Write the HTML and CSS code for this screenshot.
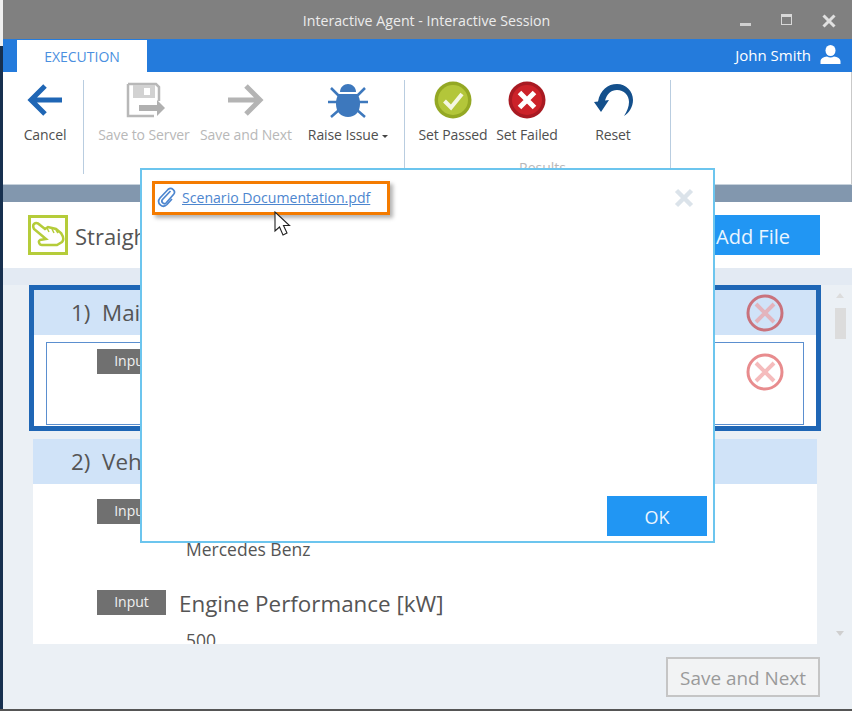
FILE: index.html
```html
<!DOCTYPE html>
<html lang="en">
<head>
<meta charset="utf-8">
<title>Interactive Agent - Interactive Session</title>
<link rel="stylesheet" href="styles.css">
</head>
<body>
<div class="window">
  <header class="titlebar">
    <span class="title">Interactive Agent - Interactive Session</span>
    <div class="winctl">
      <svg class="ctl" width="12" height="12" viewBox="0 0 12 12"><rect x="0" y="9" width="11" height="3" fill="#d0d0d0"/></svg>
      <svg class="ctl" width="12" height="12" viewBox="0 0 12 12"><rect x="0.5" y="0.5" width="10" height="10" fill="none" stroke="#d8d8d8"/><rect x="0" y="0" width="11" height="3" fill="#d8d8d8"/></svg>
      <svg class="ctl" width="14" height="14" viewBox="0 0 14 14"><path d="M1.5 1.5 12.5 12.500M12.500 1.5 1.5 12.500" stroke="#e0e0e0" stroke-width="3"/></svg>
    </div>
  </header>
  <div class="tabbar">
    <div class="tab">EXECUTION</div>
    <div class="user">
      <span>John Smith</span>
      <svg width="21" height="19" viewBox="0 0 21 19"><ellipse cx="10.500" cy="5.500" rx="5" ry="5.500" fill="#fff"/><path d="M0.500 19v-2.500c0-3 3-4.500 6.500-5 2 1.400 5 1.400 7 0 3.500 .5 6.500 2 6.500 5V19z" fill="#fff"/></svg>
    </div>
  </div>
  <nav class="ribbon">
    <div class="group group-a">
      <div class="item">
        <svg class="ico" width="40" height="38" viewBox="0 0 40 38"><path d="M37 19H6M20 5 6 19l14 14" fill="none" stroke="#1f66b5" stroke-width="5"/></svg>
        <span class="lbl">Cancel</span>
      </div>
    </div>
    <div class="group group-b">
      <div class="item wide off">
        <svg class="ico" width="44" height="38" viewBox="-2 0 44 38"><path d="M4 3H32l3 3v14M30 35H4V3" fill="none" stroke="#b8b8b8" stroke-width="2.500"/><path d="M9 4h22v13H9z" fill="#d2d2d2"/><rect x="20" y="7" width="6" height="7" fill="#fff"/><path d="M15 24h18v-5l8 8-8 8v-5H15z" fill="#b0b0b0"/></svg>
        <span class="lbl">Save to Server</span>
      </div>
      <div class="item wide off">
        <svg class="ico" width="40" height="38" viewBox="0 0 40 38"><path d="M2 19H34M20 5 34 19 20 33" fill="none" stroke="#b4b4b4" stroke-width="5"/></svg>
        <span class="lbl">Save and Next</span>
      </div>
      <div class="item wide">
        <svg class="ico" width="40" height="38" viewBox="0 0 40 38"><path d="M12 11c0-5 4-8 8-8s8 3 8 8z" fill="#3d78bd"/><path d="M11 13h18c2 2 3 5 3 10 0 8-5 13-12 13S8 31 8 23c0-5 1-8 3-10z" fill="#3d78bd"/><path d="M3 7l8 8M37 7l-8 8M0 21h9M40 21h-9M3 36l8-7M37 36l-8-7" stroke="#3d78bd" stroke-width="2.500"/></svg>
        <span class="lbl">Raise Issue <i class="caret"></i></span>
      </div>
    </div>
    <div class="group group-c">
      <div class="item mid">
        <svg class="ico" width="38" height="38" viewBox="0 0 38 38"><circle cx="19" cy="19" r="18.500" fill="#94a824"/><circle cx="19" cy="19" r="15" fill="#b3c63a"/><path d="M10.500 20l6.500 6.500L28 13" fill="none" stroke="#f4f7e2" stroke-width="4"/></svg>
        <span class="lbl">Set Passed</span>
      </div>
      <div class="item mid">
        <svg class="ico" width="38" height="38" viewBox="0 0 38 38"><circle cx="19" cy="19" r="18.500" fill="#a81a22"/><circle cx="19" cy="19" r="15" fill="#cc2229"/><path d="M11.500 11.500l15 15M26.500 11.500l-15 15" stroke="#fff" stroke-width="5"/></svg>
        <span class="lbl">Set Failed</span>
      </div>
      <div class="item last">
        <svg class="ico" width="42" height="38" viewBox="0 0 42 38"><path d="M2 21 6 20.500C8 9 16 3 25 3c9 0 16 7 16 16 0 7-4 13-9 16 3-5 5-9 5-14 0-7-5-12-12-12-6 0-10 4-12 10.500L17 19 9 31z" fill="#14508c"/></svg>
        <span class="lbl">Reset</span>
      </div>
      <span class="caption">Results</span>
    </div>
  </nav>
  <div class="strip"></div>
  <section class="head">
    <div class="head-left">
      <div class="handbox">
        <svg width="34" height="34" viewBox="0 0 34 34"><path d="M3 6C5 4 7 5 9 7l5 4 3-2 4 1 4 1 5 4c2 3 3 7 1 9l-5 3H11c-3 0-4-4-2-5l6-1L3 11C2 9 2 7 3 6z" fill="none" stroke="#b5cc3a" stroke-width="2.500"/><path d="M16 10l2 4M21 11l2 4M25 12l2 3" stroke="#b5cc3a" stroke-width="1.500"/></svg>
      </div>
      <h1 class="scen">Straight Forward</h1>
    </div>
    <button class="addfile">Add File</button>
  </section>
  <main class="content">
    <div class="viewport">
      <div class="list">
        <article class="step current">
          <div class="step-head">
            <span class="step-title">1)&nbsp; Main Data</span>
            <svg class="xcirc" width="38" height="38" viewBox="0 0 38 38"><circle cx="19" cy="19" r="17" fill="none" stroke="#c9727c" stroke-width="3"/><path d="M10 10l18 18M28 10 10 28" stroke="#e3b4bd" stroke-width="4"/></svg>
          </div>
          <div class="inner">
            <span class="badge">Input</span>
            <svg class="xcirc low" width="38" height="38" viewBox="0 0 38 38"><circle cx="19" cy="19" r="17" fill="none" stroke="#e88c8e" stroke-width="3"/><path d="M10 10l18 18M28 10 10 28" stroke="#f5bcbd" stroke-width="4"/></svg>
          </div>
        </article>
        <article class="step second">
          <div class="step-head">
            <span class="step-title">2)&nbsp; Vehicle</span>
          </div>
          <div class="field">
            <span class="badge">Input</span>
            <div class="field-body">
              <div class="field-name">Manufacturer</div>
              <div class="field-val">Mercedes Benz</div>
            </div>
          </div>
          <div class="field">
            <span class="badge">Input</span>
            <div class="field-body">
              <div class="field-name">Engine Performance [kW]</div>
              <div class="field-val">500</div>
            </div>
          </div>
        </article>
      </div>
      <div class="scroll">
        <i class="up"></i>
        <b class="thumb"></b>
        <i class="down"></i>
      </div>
    </div>
    <div class="foot"><button class="next">Save and Next</button></div>
  </main>
</div>

<div class="modal">
  <div class="modal-top">
    <div class="filebox">
      <svg width="20" height="22" viewBox="0 0 20 22"><path d="M13.500 5 5.500 13.500c-2 2.500 1.500 5.500 3.500 3.500l7.500-8.500c3-3.500-2-8-5.500-5L3 12c-4 5 2.500 11 7 6.500l5-5.500" fill="none" stroke="#4d86cf" stroke-width="1.700"/></svg>
      <a class="filelink" href="#">Scenario Documentation.pdf</a>
    </div>
    <svg class="modal-x" width="20" height="20" viewBox="0 0 20 20"><path d="M2.500 2.500l15 15M17.500 2.500l-15 15" stroke="#dbe3ea" stroke-width="4.500"/></svg>
  </div>
  <div class="modal-foot"><button class="ok">OK</button></div>
</div>
<svg class="cursor" width="17" height="25" viewBox="0 0 17 25"><path d="M1 1v19l4.500-4 3.500 8 4-2-3.500-7.500h6z" fill="#fff" stroke="#222" stroke-width="1.100"/></svg>
</body>
</html>
```
FILE: styles.css
```css
* { box-sizing: border-box; }
html, body { margin: 0; padding: 0; }
body {
  width: 852px;
  height: 711px;
  overflow: hidden;
  position: relative;
  font-family: "Open Sans", "Noto Sans", sans-serif;
  background: #fff;
  color: #555;
}
.window {
  display: flex;
  flex-direction: column;
  height: 711px;
  padding-left: 3px;
  border-bottom: 2px solid #555;
  background: linear-gradient(#f0f0f0 46px, #17304f 46px) 0 0 / 3px 100% no-repeat, #ebf0f5;
}
.titlebar {
  height: 39px;
  background: #808080;
  display: flex;
  align-items: center;
  justify-content: center;
  position: relative;
  flex: none;
}
.title { color: #ececec; font-size: 14.200px; padding: 2px 2px 0 0; }
.winctl {
  position: absolute;
  left: 737px;
  top: 14px;
  display: flex;
  gap: 29px;
  align-items: flex-start;
}
.ctl { display: block; }
.tabbar {
  height: 33px;
  background: #247bdc;
  display: flex;
  justify-content: space-between;
  padding: 1px 11px 0 14px;
  flex: none;
}
.tab {
  width: 130px;
  background: #fff;
  color: #4a8fe0;
  font-size: 14px;
  text-align: center;
  line-height: 33px;
}
.user {
  display: flex;
  align-items: center;
  gap: 9px;
  color: #fff;
  font-size: 15px;
  padding-bottom: 3px;
}
.ribbon {
  height: 113px;
  flex: none;
  background: #fff;
  display: flex;
  align-items: flex-start;
  padding-top: 8px;
  border-bottom: 1px solid #c7d2dc;
  border-right: 1px solid #c9c9c9;
}
.group {
  display: flex;
  height: 94px;
  border-right: 1px solid #b9cde0;
  position: relative;
}
.group-a { width: 81px; padding-left: 4px; }
.group-b { width: 321px; padding-left: 9px; }
.group-c { width: 266px; padding-left: 11px; }
.item {
  display: flex;
  flex-direction: column;
  align-items: center;
  width: 76px;
}
.wide { width: 102px; }
.mid { width: 74px; }
.last { width: 98px; }
.ico { display: block; margin-top: 1px; }
.lbl {
  font-size: 14px;
  letter-spacing: -.1px;
  margin-top: 6px;
  color: #4f4f4f;
  white-space: nowrap;
  line-height: 19px;
}
.off .lbl { color: #b8b8b8; }
.caret {
  display: inline-block;
  width: 0; height: 0;
  border: 3px solid transparent;
  border-top: 3px solid #444;
  border-bottom: 0;
  vertical-align: 2px;
}
.caption {
  position: absolute;
  left: 114px;
  top: 78px;
  font-size: 14px;
  color: #b8b8b8;
}
.strip { height: 17px; flex: none; background: #8297ae; }
.head {
  height: 66px;
  flex: none;
  background: #fff;
  display: flex;
  justify-content: space-between;
  align-items: flex-start;
  padding: 13px 32px 0 25px;
}
.head-left { display: flex; align-items: center; gap: 7px; }
.handbox {
  width: 40px; height: 40px;
  border: 3px solid #b5cc3a;
  display: flex;
  align-items: center;
  justify-content: center;
}
.scen { margin: 2px 0 0; font-size: 22px; font-weight: 400; color: #555; }
.addfile {
  width: 172px; height: 40px;
  background: #2196f3;
  color: #eaf5ff;
  border: 0;
  font: 20px "Open Sans", sans-serif;
  padding: 3px 0 0 68px;
  text-align: left;
  white-space: nowrap;
}
.content {
  flex: 1;
  min-height: 0;
  display: flex;
  flex-direction: column;
  border-top: 17px solid #e3eaf3;
}
.viewport {
  height: 359px;
  flex: none;
  display: flex;
  padding-left: 26px;
  overflow: hidden;
}
.list { width: 792px; flex: none; }
.step.current {
  border: 5px solid #1f66b5;
  height: 146px;
  background: #fff;
}
.step-head {
  height: 45px;
  background: #d0e3f8;
  display: flex;
  align-items: center;
  justify-content: space-between;
  padding: 0 32px 0 37px;
}
.step-title { font-size: 22.400px; color: #555; white-space: nowrap; }
.xcirc { display: block; }
.low { margin-top: 4px; }
.inner {
  margin: 7px 12px 0 12px;
  height: 83px;
  border: 1px solid #5b8fcf;
  display: flex;
  justify-content: space-between;
  align-items: flex-start;
  padding: 6px 19px 0 50px;
}
.step.second {
  margin: 8px 4px 0;
  background: #fff;
  height: 300px;
}
.second .step-head { padding-left: 38px; }
.badge {
  width: 69px;
  height: 25px;
  background: #707070;
  color: #f0f0f0;
  font-size: 14px;
  line-height: 24px;
  text-align: center;
  flex: none;
}
.field {
  display: flex;
  padding: 15px 0 0 64px;
  height: 91px;
  gap: 13px;
}
.field-name { font-size: 22.400px; line-height: 28px; color: #555; white-space: nowrap; }
.field-val { font-size: 17.500px; line-height: 24px; margin: 10px 0 0 7px; color: #555; }
.scroll {
  position: relative;
  flex: 1;
}
.thumb {
  display: block;
  width: 11px;
  height: 31px;
  background: #dcdcdc;
  margin: 23px 0 0 14px;
}
.up, .down {
  position: absolute;
  left: 15px;
  width: 0; height: 0;
  border: 4px solid transparent;
}
.up { top: 8px; border-bottom: 5px solid #dcdcdc; border-top: 0; }
.down { top: 346px; border-top: 5px solid #cfcfcf; border-bottom: 0; }
.foot {
  padding: 13px 32px 0 0;
  display: flex;
  justify-content: flex-end;
}
.next {
  width: 154px;
  height: 40px;
  background: #f2f3f4;
  border: 2px solid #c5c5c5;
  color: #9a9a9a;
  font: 18.900px "Open Sans", sans-serif;
  white-space: nowrap;
  padding: 2px 0 0;
}
.modal {
  position: absolute;
  left: 140px;
  top: 168px;
  width: 575px;
  height: 375px;
  background: #fff;
  border: 2px solid #6cc5ee;
  display: flex;
  flex-direction: column;
  justify-content: space-between;
}
.modal-top {
  display: flex;
  justify-content: space-between;
  align-items: flex-start;
  padding: 11px 19px 0 10px;
}
.filebox {
  width: 238px;
  height: 34px;
  border: 3px solid #f47b00;
  box-shadow: 3px 3px 4px rgba(0,0,0,.3);
  display: flex;
  align-items: center;
  gap: 5px;
  padding: 0 0 2px 2px;
  background: #fff;
}
.filelink { color: #4d86cf; font-size: 14.100px; white-space: nowrap; text-decoration: underline; }
.modal-x { display: block; margin-top: 7px; }
.modal-foot {
  display: flex;
  justify-content: flex-end;
  padding: 0 6px 5px 0;
}
.ok {
  width: 100px; height: 40px;
  background: #2196f3;
  color: #eaf5ff;
  border: 0;
  font: 18px "Open Sans", sans-serif;
  padding: 2px 0 0;
}
.cursor { position: absolute; left: 274px; top: 211px; }
```
